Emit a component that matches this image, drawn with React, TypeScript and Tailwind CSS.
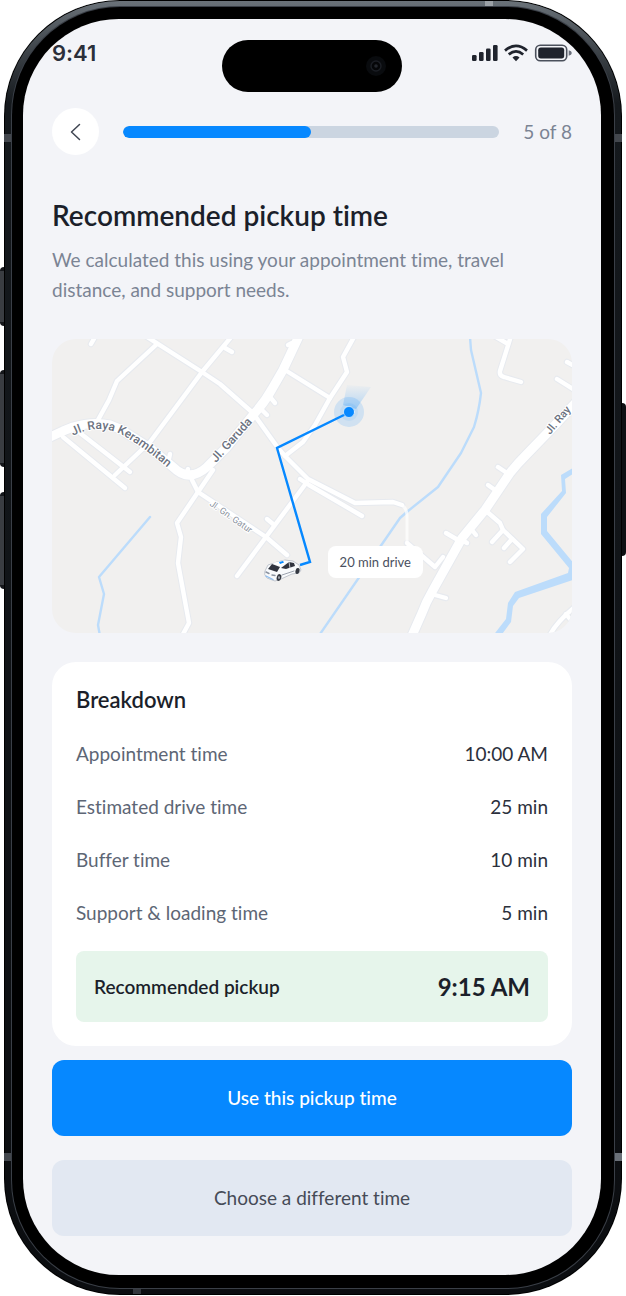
const breakdown = [
  { label: 'Appointment time', value: '10:00 AM' },
  { label: 'Estimated drive time', value: '25 min' },
  { label: 'Buffer time', value: '10 min' },
  { label: 'Support & loading time', value: '5 min' },
]

const mainRoads = [
  'M-4 99 L11 92 L21 88 Q41 82 58 86 L68 90 L98 109 L121 128 Q137 144 155 128 L175 108 L201 76 Q213 63 220 50 L231 31 L247 -3',
  'M359 299 L370 274 Q374 263 381 251 L410 199 L433 171 L458 134 Q465 125 475 115 L505 84 L526 61',
]

const smallRoads = [
  'M92 -4 L150 33 L168 45 L201 74 L226 109 L233 117 L256 140 L303 164 L341 163 L350 166',
  'M355 204 L383 228 L391 218',
  'M105 5 L65 42 L57 61 L46 81',
  'M180 -3 L150 33 L98 103 L63 136',
  'M11 98 L73 149',
  'M28 94 L78 133',
  'M173 9 L180 13',
  'M39 5 L43 -2',
  'M218 58 L223 64',
  'M210 71 L215 76',
  'M236 6 L240 4',
  'M233 31 L278 59',
  'M302 -2 L291 18 L295 33 L278 59 L263 86 L251 103 L233 117',
  'M140 141 L146 153 L214 198 L235 216',
  'M161 131 L146 153 L125 184 L129 198 L126 224 L137 284 L130 297',
  'M255 143 L214 198 L185 237',
  'M215 180 L221 185',
  'M248 140 L257 146 L310 177',
  'M118 115 L116 124',
  'M136 130 L134 136',
  'M444 -2 L456 5',
  'M459 -3 L448 32 Q447 37 452 38 L469 43',
  'M515 23 L524 28',
  'M505 40 L524 52',
  'M446 128 L455 134',
  'M436 146 L443 151',
  'M394 194 L406 201',
  'M420 191 L424 196',
  'M410 201 L415 204',
  'M383 256 L394 259',
  'M433 171 L448 184 L451 191 L471 210 L458 223',
  'M451 191 L440 203',
  'M460 200 L452 209',
  'M497 298 Q503 284 524 267',
  'M514 275 L518 280',
]

function RouteMap() {
  return (
    <svg
      viewBox="0 0 520 294"
      role="img"
      aria-label="Route map"
      className="block w-full rounded-3xl bg-[#f1f0ef]"
      fill="none"
      strokeLinecap="round"
      strokeLinejoin="round"
    >
      <defs>
        <path id="raya" d="M21 97 Q48 83 72 97 Q96 111 124 136" />
        <linearGradient id="cone" x1="0" y1="1" x2="0" y2="0">
          <stop offset="0" stopColor="#0688ff" stopOpacity="0.26" />
          <stop offset="1" stopColor="#0688ff" stopOpacity="0.02" />
        </linearGradient>
      </defs>

      {/* streams */}
      <g stroke="#bcdcfb" strokeWidth="2.4">
        <path d="M98 178 L47 238 L52 255 L46 286 L48 297" />
        <path d="M418 -2 L419 11 L429 54 Q427 72 422 88 L409 114 L386 148 L356 172 L348 179 L266 298" />
      </g>
      <path
        d="M524 127 L509 136 L510 152 L489 175 L489 195 L517 229 L516 234 L463 253 L456 264 L454 280 L440 298 L448 298 L459 283 L461 267 L467 259 L524 240 L524 227 L495 192 L495 178 L514 154 L513 140 L524 133 Z"
        fill="#bcdcfb"
      />

      {/* roads, casing first */}
      <g stroke="#e7eaef">
        {smallRoads.map((d) => <path key={d} d={d} strokeWidth="6.5" />)}
        {mainRoads.map((d) => <path key={d} d={d} strokeWidth="11" />)}
      </g>
      <g stroke="#ffffff">
        {smallRoads.map((d) => <path key={d} d={d} strokeWidth="4.4" />)}
        {mainRoads.map((d) => <path key={d} d={d} strokeWidth="9" />)}
        <path d="M350 166 Q355 170 355 176 L355 204" strokeWidth="3" strokeOpacity="0.7" />
      </g>

      {/* street names */}
      <g fill="#6b7280" stroke="#ffffff" strokeWidth="2" paintOrder="stroke" className="font-['Roboto',sans-serif] font-medium">
        <text fontSize="12">
          <textPath href="#raya">Jl. Raya Kerambitan</textPath>
        </text>
        <text fontSize="12" transform="translate(164 124) rotate(-48)">Jl. Garuda</text>
        <text fontSize="11" transform="translate(498 96) rotate(-50)">Jl. Ray</text>
        <text fontSize="9" fontWeight="400" fill="#8b93a0" transform="translate(157 166) rotate(35)">Jl. Gn. Gatur</text>
      </g>

      {/* current position */}
      <path d="M291 66 L295 46 L319 48 L304 70 Z" fill="url(#cone)" />
      <circle cx="297" cy="73" r="15" fill="#0688ff" fillOpacity="0.14" />
      <circle cx="297" cy="73" r="9" fill="#0688ff" fillOpacity="0.08" />
      <path d="M294 75 L225 109 L258 223 L248 226" stroke="#0688ff" strokeWidth="2.4" strokeLinecap="butt" strokeLinejoin="miter" />
      <circle cx="297" cy="73" r="5.5" fill="#0688ff" stroke="#ffffff" strokeOpacity="0.6" strokeWidth="1" />

      {/* car */}
      <g>
        <path d="M213 232 L216 226 L225 223 L233 221 L241 222 L247 226 L249 231 L247 234 L240 235 L229 240 L223 242 L215 239 L213 236 Z" fill="#f8fafc" stroke="#b4bac4" strokeWidth="0.8" />
        <path d="M216 230 L220 225 L228 228 L225 233 Z" fill="#30343f" />
        <path d="M220 224 L232 221.5 L236 222.5 L228 227 Z" fill="#ffffff" />
        <path d="M229 229 L237 223 L242 224 L243 227 L234 230 Z" fill="#30343f" />
        <path d="M237 223 L238 229" stroke="#e5e7eb" strokeWidth="0.8" />
        <path d="M227 223 L231 222 L232 223.5 L228 225 Z" fill="#0688ff" />
        <ellipse cx="227" cy="238.5" rx="2.3" ry="3.4" fill="#343841" transform="rotate(15 227 238.5)" />
        <ellipse cx="227" cy="238.5" rx="0.9" ry="1.5" fill="#a8adb5" />
        <ellipse cx="245.5" cy="232" rx="2" ry="3" fill="#343841" transform="rotate(15 245.5 232)" />
        <path d="M214 233 L217 234.5 M220 236 L223 236.5" stroke="#8b93a0" strokeWidth="1.4" />
        <path d="M214 237 L221 240.5" stroke="#8bbcf0" strokeWidth="1.2" />
        <path d="M230 236 L242 232" stroke="#9ca3af" strokeWidth="1" />
      </g>
    </svg>
  )
}

function StatusBar() {
  return (
    <div className="grid h-[52px] grid-cols-[1fr_180px_1fr]">
      <span className="pt-px font-['Inter',sans-serif] text-[22px] leading-6 font-semibold text-[#2b2f3a]">9:41</span>
      <div className="flex items-center justify-end rounded-full bg-black pr-4">
        <svg viewBox="0 0 20 20" className="size-5" aria-hidden="true">
          <circle cx="10" cy="10" r="10" fill="#090b0e" />
          <circle cx="10" cy="10" r="5" fill="#050608" stroke="#1b1e24" strokeWidth="1.5" />
          <circle cx="10" cy="10" r="1.8" fill="#24272d" />
        </svg>
      </div>
      <div className="flex items-start justify-end pt-1">
        <svg viewBox="0 0 100 18" className="h-[18px] w-[100px]" aria-hidden="true">
          <g fill="#1f232d">
            <rect x="0" y="11" width="4.6" height="6" rx="1.3" />
            <rect x="7" y="8" width="4.6" height="9" rx="1.3" />
            <rect x="14" y="4.5" width="4.6" height="12.5" rx="1.3" />
            <rect x="21" y="1" width="4.6" height="16" rx="1.3" />
            <path d="M40.5 13.4 Q44 10.6 47.5 13.4 L44 17.3 Z" strokeLinejoin="round" />
          </g>
          <g fill="none" stroke="#1f232d" strokeWidth="2.7">
            <path d="M33 6.6 Q44 -2.8 55 6.6" />
            <path d="M36.8 10.4 Q44 4.2 51.2 10.4" />
          </g>
          <rect x="63.7" y="1.2" width="31" height="15.6" rx="4.5" fill="none" stroke="#4b505c" strokeWidth="1.6" />
          <rect x="66.2" y="3.6" width="26" height="10.8" rx="2.6" fill="#1f232d" />
          <path d="M96.7 6.2 Q99.8 7 99.8 9 Q99.8 11 96.7 11.8 Z" fill="#6b707c" />
        </svg>
      </div>
    </div>
  )
}

export default function App() {
  return (
    <div className="min-h-screen bg-white px-1">
      <div className="relative rounded-[116px] bg-[#15191d] bg-linear-to-b from-[#6b737a] via-[#15191d] via-8% to-[#0b0d10] px-2 py-[7px] ring-1 ring-black ring-inset">
        {/* side keys */}
        <div className="absolute top-[267px] -left-1 h-[59px] w-1 rounded-l-sm border-y-4 border-[#15171b] bg-[#3a3d42]" />
        <div className="absolute top-[370px] -left-1 h-[97px] w-1 rounded-l-sm border-y-4 border-[#15171b] bg-[#3a3d42]" />
        <div className="absolute top-[492px] -left-1 h-[97px] w-1 rounded-l-sm border-y-4 border-[#15171b] bg-[#3a3d42]" />
        <div className="absolute top-[403px] -right-1 h-[153px] w-1 rounded-r-sm bg-[#0e1013]" />
        {/* antenna bands */}
        <div className="absolute top-[134px] left-0 h-2 w-2 bg-[#43474d]" />
        <div className="absolute top-[134px] right-0 h-2 w-2 bg-[#43474d]" />
        <div className="absolute bottom-[134px] left-0 h-2 w-2 bg-[#43474d]" />
        <div className="absolute right-0 bottom-[134px] h-2 w-2 bg-[#6a7078]" />
        <div className="absolute top-px right-[129px] h-1.5 w-2 bg-[#9ba1a6]" />
        <div className="absolute bottom-px left-[129px] h-1.5 w-2 bg-[#34373d]" />

        <div className="relative rounded-[108px] bg-black pt-3 pr-[13px] pb-[13px] pl-[11px] ring-1 ring-[#3a3f47]">
          <main className="flex flex-col rounded-[96px] bg-[#f3f4f8] px-[29px] pt-[21px] pb-[39px] font-['Lato',sans-serif] text-[#1b1f2a] [font-variant-ligatures:none]">
            <StatusBar />

            <header className="mt-4 flex items-center gap-6">
              <button type="button" aria-label="Back" className="flex size-[47px] shrink-0 items-center justify-center rounded-full bg-white">
                <svg viewBox="0 0 18 18" className="size-[18px]" fill="none" stroke="#3f4552" strokeWidth="1.5" strokeLinecap="round" strokeLinejoin="round" aria-hidden="true">
                  <path d="M12.5 1.5 L4.5 9 L12.5 16.5" />
                </svg>
              </button>
              <div role="progressbar" aria-label="Progress" aria-valuemin={0} aria-valuemax={8} aria-valuenow={5} className="h-3 flex-1 overflow-hidden rounded-full bg-[#cbd5e1]">
                <div className="h-full w-1/2 rounded-full bg-[#0688ff]" />
              </div>
              <span className="text-[19px] leading-7 text-[#7b8494]">5 of 8</span>
            </header>

            <h1 className="mt-[42px] text-[28px] leading-9 font-semibold">Recommended pickup time</h1>
            <p className="mt-3 text-[19px] leading-[30px] text-[#7b8494]">
              We calculated this using your appointment time, travel distance, and support needs.
            </p>

            <section className="relative mt-[34px]">
              <RouteMap />
              <span className="absolute top-[207px] left-[53%] rounded-lg bg-white px-3 py-1.5 text-[13px] leading-5 text-[#4a5060]">20 min drive</span>
            </section>

            <section className="mt-[29px] rounded-3xl bg-white p-6">
              <h2 className="text-[22px] leading-7 font-semibold">Breakdown</h2>
              <dl className="mt-[25px] flex flex-col gap-6 text-[19px] leading-[29px]">
                {breakdown.map((row) => (
                  <div key={row.label} className="flex justify-between">
                    <dt className="text-[#5d6675]">{row.label}</dt>
                    <dd className="text-[#2b303c]">{row.value}</dd>
                  </div>
                ))}
                <div className="flex items-center justify-between rounded-lg bg-[#e6f5eb] px-[18px] py-[21px]">
                  <dt className="font-semibold">Recommended pickup</dt>
                  <dd className="text-2xl leading-[29px] font-bold">9:15 AM</dd>
                </div>
              </dl>
            </section>

            <button type="button" className="mt-[14px] rounded-xl bg-[#0688ff] py-6 text-[19px] leading-7 font-medium text-white">
              Use this pickup time
            </button>
            <button type="button" className="mt-6 rounded-xl bg-[#e2e8f2] py-6 text-[19px] leading-7 text-[#464b57]">
              Choose a different time
            </button>
          </main>
        </div>
      </div>
    </div>
  )
}
